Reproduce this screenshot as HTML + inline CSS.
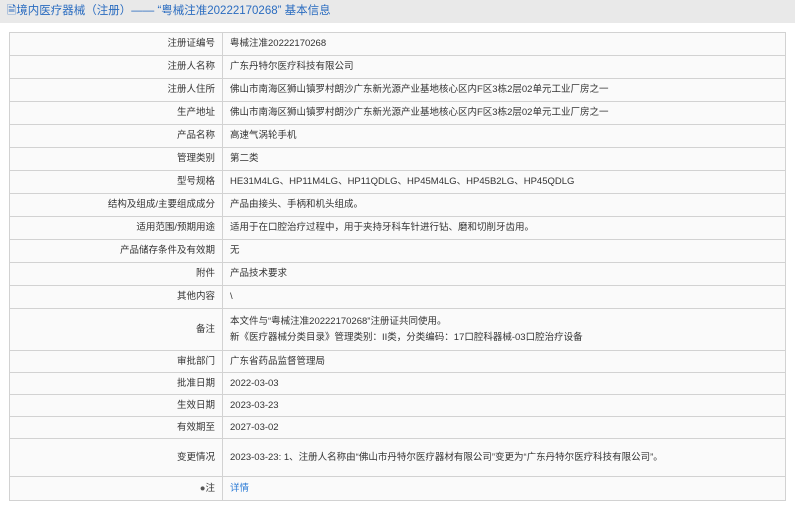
<!DOCTYPE html>
<html><head><meta charset="utf-8"><style>
body{margin:0;width:795px;height:510px;background:#fff;font-family:"Liberation Sans","Noto Sans CJK SC",sans-serif;color:#333;overflow:hidden}
.hd{position:absolute;left:0;top:0;width:795px;height:23px;background:#e9e9e9;color:#2a6cc0;font-size:11.5px;line-height:23px;padding-left:7px;box-sizing:border-box}
table{position:absolute;left:9px;top:32px;width:777px;border-collapse:collapse;font-size:9.5px;background:#fafafa}
td{border:1px solid #d2d2d2;padding:0 7px;line-height:14px}
td.l{width:198px;text-align:right}
a{color:#2a7ad5;text-decoration:none}
</style></head><body>
<div class="hd">🗎境内医疗器械（注册）—— “粤械注准20222170268” 基本信息</div>
<table>
<tr style="height:23px"><td class="l">注册证编号</td><td>粤械注准20222170268</td></tr>
<tr style="height:23px"><td class="l">注册人名称</td><td>广东丹特尔医疗科技有限公司</td></tr>
<tr style="height:23px"><td class="l">注册人住所</td><td>佛山市南海区狮山镇罗村朗沙广东新光源产业基地核心区内F区3栋2层02单元工业厂房之一</td></tr>
<tr style="height:23px"><td class="l">生产地址</td><td>佛山市南海区狮山镇罗村朗沙广东新光源产业基地核心区内F区3栋2层02单元工业厂房之一</td></tr>
<tr style="height:23px"><td class="l">产品名称</td><td>高速气涡轮手机</td></tr>
<tr style="height:23px"><td class="l">管理类别</td><td>第二类</td></tr>
<tr style="height:23px"><td class="l">型号规格</td><td>HE31M4LG、HP11M4LG、HP11QDLG、HP45M4LG、HP45B2LG、HP45QDLG</td></tr>
<tr style="height:23px"><td class="l">结构及组成/主要组成成分</td><td>产品由接头、手柄和机头组成。</td></tr>
<tr style="height:23px"><td class="l">适用范围/预期用途</td><td>适用于在口腔治疗过程中，用于夹持牙科车针进行钻、磨和切削牙齿用。</td></tr>
<tr style="height:23px"><td class="l">产品储存条件及有效期</td><td>无</td></tr>
<tr style="height:23px"><td class="l">附件</td><td>产品技术要求</td></tr>
<tr style="height:23px"><td class="l">其他内容</td><td>\</td></tr>
<tr style="height:42px"><td class="l">备注</td><td style="line-height:16px">本文件与“粤械注准20222170268”注册证共同使用。<br>新《医疗器械分类目录》管理类别：II类，分类编码：17口腔科器械-03口腔治疗设备</td></tr>
<tr style="height:22px"><td class="l">审批部门</td><td>广东省药品监督管理局</td></tr>
<tr style="height:22px"><td class="l">批准日期</td><td>2022-03-03</td></tr>
<tr style="height:22px"><td class="l">生效日期</td><td>2023-03-23</td></tr>
<tr style="height:22px"><td class="l">有效期至</td><td>2027-03-02</td></tr>
<tr style="height:38px"><td class="l">变更情况</td><td>2023-03-23: 1、注册人名称由“佛山市丹特尔医疗器材有限公司”变更为“广东丹特尔医疗科技有限公司”。</td></tr>
<tr style="height:24px"><td class="l"><span style="color:#555">●</span>注</td><td><a>详情</a></td></tr>
</table>
</body></html>
